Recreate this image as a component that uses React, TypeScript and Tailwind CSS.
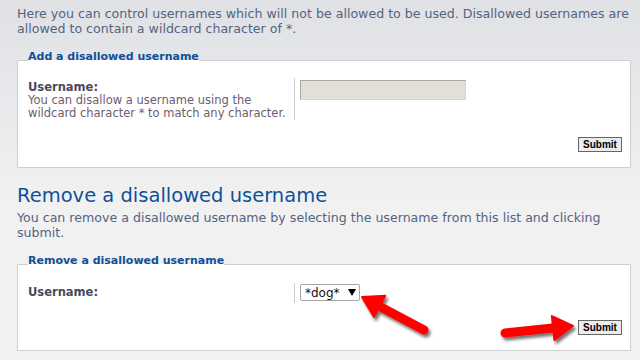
import React from "react";

function Arrow({ tail, tip, id }: { tail: [number, number]; tip: [number, number]; id: string }) {
  const dx = tip[0] - tail[0];
  const dy = tip[1] - tail[1];
  const len = Math.hypot(dx, dy);
  const ux = dx / len;
  const uy = dy / len;
  const nx = -uy;
  const ny = ux;
  const L = 20;
  const H = 12;
  const neck: [number, number] = [tip[0] - ux * L, tip[1] - uy * L];
  const pts = [
    [tip[0], tip[1]],
    [neck[0] + nx * H, neck[1] + ny * H],
    [neck[0] - nx * H, neck[1] - ny * H],
  ]
    .map((p) => p.join(","))
    .join(" ");
  return (
    <g filter={`url(#${id})`}>
      <line x1={tail[0]} y1={tail[1]} x2={neck[0] + ux * 2} y2={neck[1] + uy * 2} stroke="#f00" strokeWidth={9} strokeLinecap="round" />
      <polygon points={pts} fill="#f00" stroke="#f00" strokeWidth={2} strokeLinejoin="round" />
    </g>
  );
}

function SubmitButton() {
  return (
    <div className="flex justify-end">
      <div className="flex h-[15px] w-[44px] items-center justify-center border border-[#666] bg-[#ececec] font-['Liberation_Sans',Arial,sans-serif] text-[10px] font-bold leading-none text-black">
        Submit
      </div>
    </div>
  );
}

export default function App() {
  return (
    <div className="relative h-[360px] w-[640px] overflow-hidden bg-[linear-gradient(180deg,#dfe1e5_0px,#f1f1f1_200px,#f1f1f1_100%)] pl-[17px] font-['DejaVu_Sans',Verdana,sans-serif]">
      <p className="whitespace-nowrap pt-[6px] text-[12.6px] leading-[15px] text-[#536482]">
        Here you can control usernames which will not be allowed to be used. Disallowed usernames are
        <br />
        allowed to contain a wildcard character of *.
      </p>

      <fieldset className="mt-[14px] w-[614px] border border-[#cfcfcf] bg-white pb-[15px] pl-[10px] pr-[8px] pt-[7px]">
        <legend className="pb-[7px] text-[11px] font-bold leading-[14px] text-[#115098]">Add a disallowed username</legend>
        <div className="flex">
          <div className="w-[267px] border-r border-[#cccccc] pt-[3px] text-[11.5px] leading-[13px]">
            <div className="font-bold text-[#4a4860]">Username:</div>
            <div className="whitespace-nowrap text-[#6b5d70]">
              You can disallow a username using the
              <br />
              wildcard character * to match any character.
            </div>
          </div>
          <div className="pl-[5px] pt-[2px]">
            <div className="h-[20px] w-[166px] border border-b-[#d8d4ce] border-l-[#aaa6a0] border-r-[#d8d4ce] border-t-[#aaa6a0] bg-[#e2ded8]" />
          </div>
        </div>
        <div className="mt-[17px]">
          <SubmitButton />
        </div>
      </fieldset>

      <h1 className="mt-[16px] whitespace-nowrap text-[19.5px] font-normal leading-[24px] text-[#115098]">Remove a disallowed username</h1>
      <p className="mt-[2px] whitespace-nowrap text-[12.6px] leading-[15px] text-[#536482]">
        You can remove a disallowed username by selecting the username from this list and clicking
        <br />
        submit.
      </p>

      <fieldset className="mt-[14px] w-[614px] border border-[#cfcfcf] bg-white pb-[15px] pl-[10px] pr-[8px] pt-[8px]">
        <legend className="pb-[7px] text-[11px] font-bold leading-[14px] text-[#115098]">Remove a disallowed username</legend>
        <div className="flex">
          <div className="h-[20px] w-[267px] border-r border-[#cccccc] pt-[3px] text-[11.5px] leading-[13px]">
            <div className="font-bold text-[#4a4860]">Username:</div>
          </div>
          <div className="pl-[5px] pt-[1px]">
            <div className="flex h-[17px] w-[60px] items-center rounded-[2px] border border-[#a5a5a5] bg-white pl-[4px] text-[12px] leading-none text-[#111]">
              <span>*dog*</span>
              <svg width="8" height="7" viewBox="0 0 8 7" className="ml-[8px]">
                <polygon points="0,0 8,0 4,7" fill="#000" />
              </svg>
            </div>
          </div>
        </div>
        <div className="mt-[17px]">
          <SubmitButton />
        </div>
      </fieldset>

      <svg className="pointer-events-none absolute left-0 top-0" width="640" height="360">
        <defs>
          <filter id="sh" x="-20%" y="-50%" width="140%" height="200%">
            <feDropShadow dx="2" dy="3" stdDeviation="1.6" floodColor="#000" floodOpacity="0.55" />
          </filter>
        </defs>
        <Arrow id="sh" tail={[424, 330]} tip={[362, 297]} />
        <Arrow id="sh" tail={[505, 333]} tip={[573, 326]} />
      </svg>
    </div>
  );
}
